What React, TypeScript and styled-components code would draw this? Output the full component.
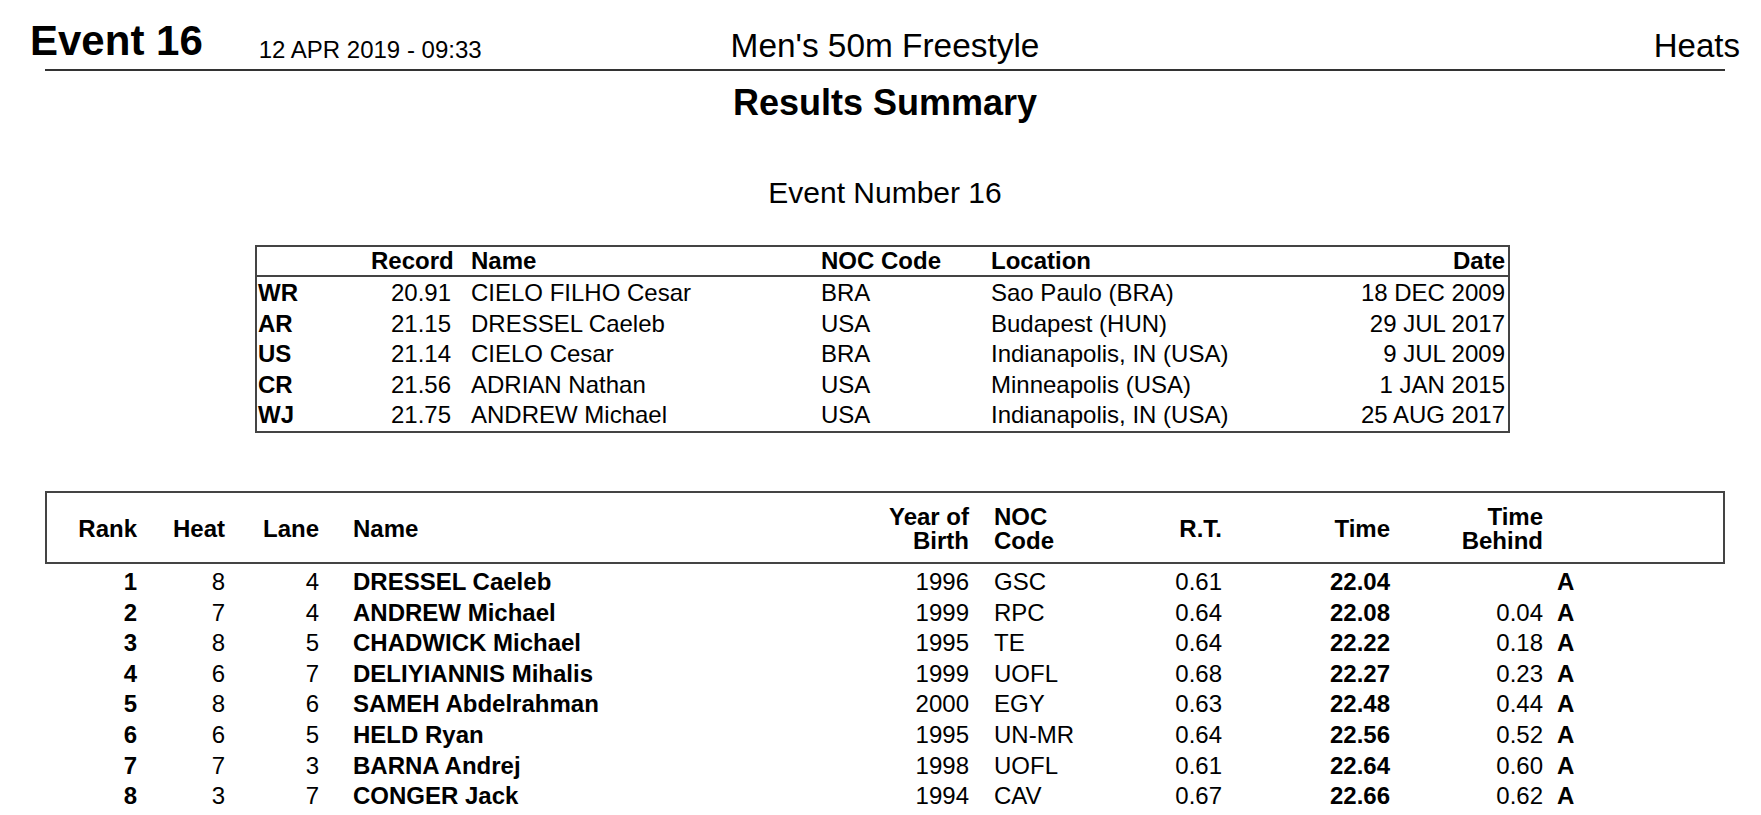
import React from 'react';
import styled, { createGlobalStyle } from 'styled-components';

const GlobalStyle = createGlobalStyle`
  html, body { margin: 0; padding: 0; background: #ffffff; }
  body {
    font-family: "Liberation Sans", Arial, Helvetica, sans-serif;
    color: #000000;
  }
  * { box-sizing: border-box; }
`;

const Page = styled.div`
  width: 1761px;
  height: 815px;
  overflow: hidden;
  padding-top: 20px;
  display: flex;
  flex-direction: column;
`;

const TopBar = styled.header`
  display: grid;
  grid-template-columns: 1fr auto 1fr;
  align-items: end;
  height: 42px;
  margin: 0 21px 0 30px;
`;

const TopLeft = styled.div`
  display: flex;
  align-items: flex-end;
  gap: 56px;
`;

const EventTitle = styled.div`
  font-size: 42px;
  line-height: 42px;
  font-weight: 700;
  white-space: nowrap;
`;

const DateStamp = styled.div`
  font-size: 24px;
  line-height: 24px;
  white-space: nowrap;
`;

const EventName = styled.div`
  font-size: 33.4px;
  line-height: 33px;
  white-space: nowrap;
`;

const Phase = styled.div`
  justify-self: end;
  font-size: 33px;
  line-height: 33px;
  white-space: nowrap;
`;

const Rule = styled.div`
  height: 2px;
  margin: 7px 36px 0 45px;
  background: #333333;
`;

const SummaryTitle = styled.h1`
  margin: 14px 36px 0 45px;
  font-size: 36px;
  line-height: 36px;
  font-weight: 700;
  text-align: center;
`;

const EventNumber = styled.div`
  margin: 57px 36px 0 45px;
  font-size: 30px;
  line-height: 30px;
  text-align: center;
`;

/* ---------- records table ---------- */

const recCols = '113px 80px 370px 170px 309px 205px';

const RecordsBox = styled.section`
  margin: 37px 0 0 255px;
  width: 1255px;
  border: 2px solid #444444;
`;

const RecordsHead = styled.div`
  display: grid;
  grid-template-columns: ${recCols};
  align-items: center;
  height: 30px;
  padding: 0 3px 0 1px;
  border-bottom: 2px solid #444444;
  font-size: 24px;
  line-height: 28px;
  font-weight: 700;
`;

const RecordsBody = styled.div`
  padding-top: 1px;
`;

const RecordRow = styled.div`
  display: grid;
  grid-template-columns: ${recCols};
  align-items: center;
  height: 30.6px;
  padding: 0 3px 0 1px;
  font-size: 24px;
  line-height: 30.6px;
  font-weight: 400;
`;

/* ---------- results table ---------- */

const resCols = '90px 88px 94px 561px 89px 131px 122px 168px 153px 180px';

const ResultsHead = styled.div`
  display: grid;
  grid-template-columns: ${resCols};
  align-items: center;
  height: 73px;
  margin: 58px 36px 0 45px;
  padding-top: 3px;
  border: 2px solid #444444;
  font-size: 24px;
  line-height: 24px;
  font-weight: 700;
`;

const ResultsBody = styled.div`
  margin: 3px 36px 0 45px;
  padding: 0 2px;
`;

const ResultRow = styled.div`
  display: grid;
  grid-template-columns: ${resCols};
  align-items: center;
  height: 30.6px;
  font-size: 24px;
  line-height: 30.6px;
  font-weight: 400;
`;

const Cell = styled.div<{ $right?: boolean; $pad?: number; $bold?: boolean }>`
  text-align: ${(p) => (p.$right ? 'right' : 'left')};
  padding-left: ${(p) => p.$pad ?? 0}px;
  ${(p) => (p.$bold ? 'font-weight: 700;' : '')}
  white-space: nowrap;
`;

const Line = styled.span`
  display: block;
`;

const records = [
  ['WR', '20.91', 'CIELO FILHO Cesar', 'BRA', 'Sao Paulo (BRA)', '18 DEC 2009'],
  ['AR', '21.15', 'DRESSEL Caeleb', 'USA', 'Budapest (HUN)', '29 JUL 2017'],
  ['US', '21.14', 'CIELO Cesar', 'BRA', 'Indianapolis, IN (USA)', '9 JUL 2009'],
  ['CR', '21.56', 'ADRIAN Nathan', 'USA', 'Minneapolis (USA)', '1 JAN 2015'],
  ['WJ', '21.75', 'ANDREW Michael', 'USA', 'Indianapolis, IN (USA)', '25 AUG 2017'],
];

const results = [
  ['1', '8', '4', 'DRESSEL Caeleb', '1996', 'GSC', '0.61', '22.04', '', 'A'],
  ['2', '7', '4', 'ANDREW Michael', '1999', 'RPC', '0.64', '22.08', '0.04', 'A'],
  ['3', '8', '5', 'CHADWICK Michael', '1995', 'TE', '0.64', '22.22', '0.18', 'A'],
  ['4', '6', '7', 'DELIYIANNIS Mihalis', '1999', 'UOFL', '0.68', '22.27', '0.23', 'A'],
  ['5', '8', '6', 'SAMEH Abdelrahman', '2000', 'EGY', '0.63', '22.48', '0.44', 'A'],
  ['6', '6', '5', 'HELD Ryan', '1995', 'UN-MR', '0.64', '22.56', '0.52', 'A'],
  ['7', '7', '3', 'BARNA Andrej', '1998', 'UOFL', '0.61', '22.64', '0.60', 'A'],
  ['8', '3', '7', 'CONGER Jack', '1994', 'CAV', '0.67', '22.66', '0.62', 'A'],
];

export default function App() {
  return (
    <>
      <GlobalStyle />
      <Page>
        <TopBar>
          <TopLeft>
            <EventTitle>Event 16</EventTitle>
            <DateStamp>12 APR 2019 - 09:33</DateStamp>
          </TopLeft>
          <EventName>Men's 50m Freestyle</EventName>
          <Phase>Heats</Phase>
        </TopBar>
        <Rule />
        <SummaryTitle>Results Summary</SummaryTitle>
        <EventNumber>Event Number 16</EventNumber>

        <RecordsBox>
          <RecordsHead>
            <Cell />
            <Cell $right>Record</Cell>
            <Cell $pad={20}>Name</Cell>
            <Cell>NOC Code</Cell>
            <Cell>Location</Cell>
            <Cell $right>Date</Cell>
          </RecordsHead>
          <RecordsBody>
            {records.map((r) => (
              <RecordRow key={r[0]}>
                <Cell $bold>{r[0]}</Cell>
                <Cell $right>{r[1]}</Cell>
                <Cell $pad={20}>{r[2]}</Cell>
                <Cell>{r[3]}</Cell>
                <Cell>{r[4]}</Cell>
                <Cell $right>{r[5]}</Cell>
              </RecordRow>
            ))}
          </RecordsBody>
        </RecordsBox>

        <ResultsHead>
          <Cell $right>Rank</Cell>
          <Cell $right>Heat</Cell>
          <Cell $right>Lane</Cell>
          <Cell $pad={34}>Name</Cell>
          <Cell $right>
            <Line>Year of</Line>
            <Line>Birth</Line>
          </Cell>
          <Cell $pad={25}>
            <Line>NOC</Line>
            <Line>Code</Line>
          </Cell>
          <Cell $right>R.T.</Cell>
          <Cell $right>Time</Cell>
          <Cell $right>
            <Line>Time</Line>
            <Line>Behind</Line>
          </Cell>
          <Cell />
        </ResultsHead>
        <ResultsBody>
          {results.map((r) => (
            <ResultRow key={r[0]}>
              <Cell $right $bold>{r[0]}</Cell>
              <Cell $right>{r[1]}</Cell>
              <Cell $right>{r[2]}</Cell>
              <Cell $pad={34} $bold>{r[3]}</Cell>
              <Cell $right>{r[4]}</Cell>
              <Cell $pad={25}>{r[5]}</Cell>
              <Cell $right>{r[6]}</Cell>
              <Cell $right $bold>{r[7]}</Cell>
              <Cell $right>{r[8]}</Cell>
              <Cell $pad={14} $bold>{r[9]}</Cell>
            </ResultRow>
          ))}
        </ResultsBody>
      </Page>
    </>
  );
}
